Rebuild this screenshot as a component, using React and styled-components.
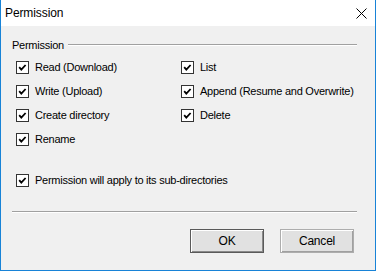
import React from "react";
import styled, { createGlobalStyle } from "styled-components";

const Global = createGlobalStyle`
  html, body { margin: 0; padding: 0; background: #ffffff; }
  body { font-family: "Liberation Sans", Arial, sans-serif; font-size: 11px; letter-spacing: -0.25px; color: #000; }
  * { box-sizing: border-box; }
`;

const Window = styled.div`
  width: 376px;
  height: 271px;
  border: 1px solid #1883d7;
  border-top: none;
  background: #f0f0f0;
  display: flex;
  flex-direction: column;
`;

const TitleBar = styled.div`
  height: 26px;
  background: #ffffff;
  display: flex;
  align-items: center;
  justify-content: space-between;
  padding: 0 8px 0 4px;
  font-size: 12px;
  letter-spacing: -0.1px;
`;

const CloseButton = styled.div`
  width: 12px;
  height: 12px;
  display: flex;
  align-items: center;
  justify-content: center;
`;

const Body = styled.div`
  padding: 0 18px 0 11px;
  display: flex;
  flex-direction: column;
`;

const GroupHeader = styled.div`
  margin-top: 11px;
  height: 15px;
  display: flex;
  align-items: center;
`;

const GroupLine = styled.div`
  flex: 1;
  margin-left: 4px;
  height: 2px;
  border-top: 1px solid #a0a0a0;
  border-bottom: 1px solid #ffffff;
`;

const Grid = styled.div`
  margin-top: 3px;
  padding-left: 4px;
  display: grid;
  grid-template-columns: 165px 1fr;
  grid-auto-rows: 24px;
`;

const Row = styled.label`
  display: flex;
  align-items: center;
  gap: 6px;
  height: 24px;
  margin-top: ${(p) => p.$top || 0}px;
  padding-left: ${(p) => p.$indent || 0}px;
  white-space: nowrap;
`;

const Box = styled.span`
  width: 13px;
  height: 13px;
  border: 1px solid #333333;
  background: #ffffff;
  display: inline-flex;
  flex-shrink: 0;
`;

const Separator = styled.div`
  margin-top: 19px;
  height: 2px;
  border-top: 1px solid #a0a0a0;
  border-bottom: 1px solid #ffffff;
`;

const Buttons = styled.div`
  margin-top: 16px;
  display: flex;
  justify-content: flex-end;
  gap: 16px;
  padding-right: 3px;
`;

const Button = styled.button`
  width: 74px;
  height: 24px;
  font-family: inherit;
  font-size: 12px;
  letter-spacing: -0.2px;
  color: #000;
  background: #e1e1e1;
  border: 1px solid ${(p) => (p.$default ? "#5a5a5a" : "#adadad")};
  box-shadow: ${(p) =>
    p.$default
      ? "inset 1px 1px 0 #ffffff, inset -1px -1px 0 #8a8a8a"
      : "inset 1px 1px 0 #ffffff, inset -1px -1px 0 #a0a0a0"};
  padding: 0;
`;

const Check = ({ label, top, indent }) => (
  <Row $top={top} $indent={indent}>
    <Box>
      <svg width="11" height="11" viewBox="0 0 11 11">
        <polyline points="2.2,5.2 4.3,7.6 8.6,3" fill="none" stroke="#000" strokeWidth="1.8" />
      </svg>
    </Box>
    <span>{label}</span>
  </Row>
);

export default function App() {
  return (
    <>
      <Global />
      <Window>
        <TitleBar>
          <span>Permission</span>
          <CloseButton>
            <svg width="11" height="11" viewBox="0 0 11 11">
              <path d="M0.5 0.5 L10.5 10.5 M10.5 0.5 L0.5 10.5" stroke="#000" strokeWidth="1" />
            </svg>
          </CloseButton>
        </TitleBar>
        <Body>
          <GroupHeader>
            <span>Permission</span>
            <GroupLine />
          </GroupHeader>
          <Grid>
            <Check label="Read (Download)" />
            <Check label="List" />
            <Check label="Write (Upload)" />
            <Check label="Append (Resume and Overwrite)" />
            <Check label="Create directory" />
            <Check label="Delete" />
            <Check label="Rename" />
          </Grid>
          <Check label="Permission will apply to its sub-directories" top={17} indent={4} />
          <Separator />
          <Buttons>
            <Button $default>OK</Button>
            <Button>Cancel</Button>
          </Buttons>
        </Body>
      </Window>
    </>
  );
}
